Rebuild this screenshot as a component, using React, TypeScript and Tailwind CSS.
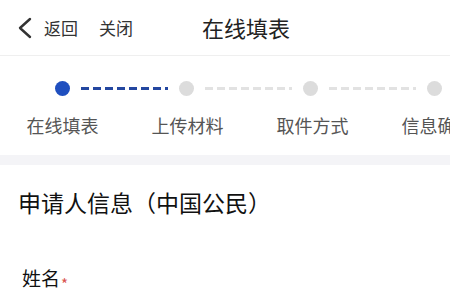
const STEPS = ["在线填表", "上传材料", "取件方式", "信息确认"];

const FONT = "font-['Noto_Sans_CJK_SC','Noto_Sans',sans-serif]";

function Dashes({ active }: { active: boolean }) {
  return (
    <div
      className={`mx-[11px] h-[3px] w-[87px] ${
        active
          ? "bg-[repeating-linear-gradient(90deg,#2447a0_0_8px,transparent_8px_12px)]"
          : "bg-[repeating-linear-gradient(90deg,#e2e2e2_0_8px,transparent_8px_12px)]"
      }`}
    />
  );
}

export default function App() {
  return (
    <div className={`h-[300px] w-[450px] overflow-hidden bg-white ${FONT}`}>
      {/* Header */}
      <div className="flex h-[56px] items-center border-b border-[#efefef] pl-[17px]">
        <svg width="16" height="22" viewBox="0 0 16 22" className="text-[#333]">
          <path d="M13 2 L3 11 L13 20" fill="none" stroke="currentColor" strokeWidth="2.4" strokeLinecap="round" strokeLinejoin="round" />
        </svg>
        <span className="ml-[11px] text-[17px] text-[#333]">返回</span>
        <span className="ml-[21px] text-[17px] text-[#333]">关闭</span>
        <span className="ml-[69px] text-[22px] text-[#222]">在线填表</span>
      </div>

      {/* Steps */}
      <div className="flex h-[99px] flex-col pt-[25px]">
        <div className="flex items-center pl-[55px]">
          <div className="h-[15px] w-[15px] rounded-full bg-[#1f4fbf]" />
          <Dashes active />
          <div className="h-[15px] w-[15px] rounded-full bg-[#dcdcdc]" />
          <Dashes active={false} />
          <div className="h-[15px] w-[15px] rounded-full bg-[#dcdcdc]" />
          <Dashes active={false} />
          <div className="h-[15px] w-[15px] rounded-full bg-[#dcdcdc]" />
        </div>
        <div className="mt-[16px] grid w-[500px] grid-cols-[125px_125px_125px_125px]">
          {STEPS.map((s) => (
            <span key={s} className="text-center text-[18px] leading-[26px] text-[#555]">
              {s}
            </span>
          ))}
        </div>
      </div>

      <div className="h-[10px] bg-[#f4f4f7]" />

      {/* Section */}
      <div className="px-[18px] pt-[21px]">
        <h2 className="text-[23px] leading-[32px] text-[#111]">申请人信息（中国公民）</h2>
        <div className="mt-[47px] flex items-center pl-[4px]">
          <span className="text-[19px] leading-[26px] text-[#111]">姓名</span>
          <span className="ml-[1px] mt-[10px] text-[15px] leading-[15px] text-[#d9534f]">*</span>
        </div>
      </div>
    </div>
  );
}
